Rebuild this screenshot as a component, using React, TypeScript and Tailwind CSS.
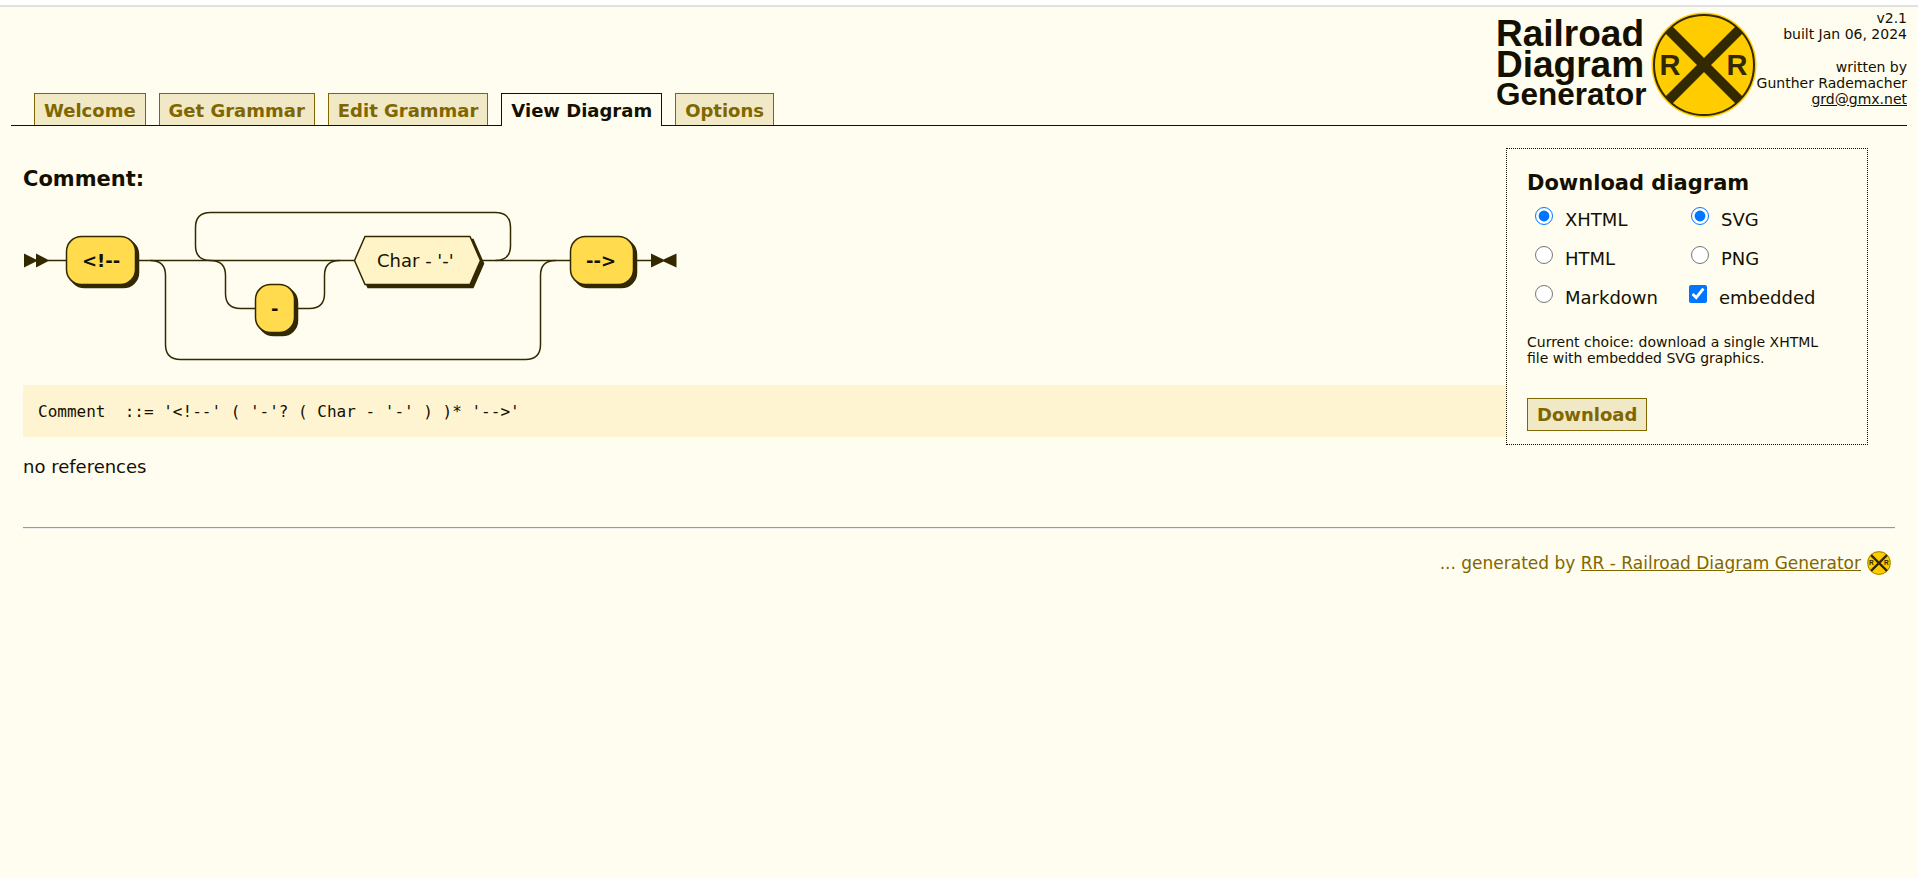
import { useState } from "react";

const tabs = ["Welcome", "Get Grammar", "Edit Grammar", "View Diagram", "Options"];

function CrossingSign({ className }: { className: string }) {
  return (
    <svg viewBox="0 0 106 106" className={className} aria-hidden="true">
      <circle cx="53" cy="53" r="52.5" fill="#ffcc00" />
      <circle cx="53" cy="53" r="50" fill="none" stroke="#332900" strokeWidth="2" />
      <path d="M18 18 88 88M88 18 18 88" stroke="#332900" strokeWidth="10" />
      <g fill="#332900" fontFamily="'Liberation Sans', sans-serif" fontWeight="bold" fontSize="29">
        <text x="8.5" y="63">R</text>
        <text x="75.5" y="63">R</text>
      </g>
    </svg>
  );
}

function Tabs({ active, onSelect }: { active: string; onSelect: (t: string) => void }) {
  return (
    <nav className="flex items-end gap-[13px] pl-[23px]">
      {tabs.map((t) => (
        <button
          key={t}
          type="button"
          onClick={() => onSelect(t)}
          className={
            t === active
              ? "-mb-px h-[33px] border border-b-0 border-[#141000] bg-[#fffdf0] px-[9px] pt-0.5 text-lg leading-none font-bold text-[#141000]"
              : "h-8 border border-b-0 border-[#806600] bg-[#f1e8c6] px-[9px] pt-0.5 text-lg leading-none font-bold text-[#806600]"
          }
        >
          {t}
        </button>
      ))}
    </nav>
  );
}

function Terminal({ x, y, w, label, tx }: { x: number; y: number; w: number; label: string; tx: number }) {
  return (
    <g>
      <rect x={x + 3} y={y + 3} width={w} height="48" rx="15" fill="#332900" stroke="#332900" strokeWidth="1.5" />
      <rect x={x} y={y} width={w} height="48" rx="15" fill="#ffdb4d" stroke="#332900" strokeWidth="1.5" />
      <text x={tx} y={y + 30.5} fill="#141000" fontSize="18" fontWeight="bold">
        {label}
      </text>
    </g>
  );
}

function RailroadDiagram() {
  return (
    <svg viewBox="23 209 656 156" className="h-[156px] w-[656px]" role="img" aria-label="Comment syntax diagram" fontFamily="Verdana, 'DejaVu Sans', sans-serif">
      <g fill="none" stroke="#332900" strokeWidth="1.5">
        <path d="M48 260.5H66M137 260.5H355M481 260.5H570M634 260.5H652" />
        <path d="M210.5 260.5Q195.5 260.5 195.5 245.5V227.5Q195.5 212.5 210.5 212.5H495.5Q510.5 212.5 510.5 227.5V245.5Q510.5 260.5 495.5 260.5" />
        <path d="M210.5 260.5Q225.5 260.5 225.5 275.5V293.5Q225.5 308.5 240.5 308.5H309.5Q324.5 308.5 324.5 293.5V275.5Q324.5 260.5 339.5 260.5" />
        <path d="M150.5 260.5Q165.5 260.5 165.5 275.5V344.5Q165.5 359.5 180.5 359.5H525.5Q540.5 359.5 540.5 344.5V275.5Q540.5 260.5 555.5 260.5" />
      </g>
      <g fill="#332900">
        <path d="M24 253.5 38 260.5 24 267.5ZM36 253.5 49.5 260.5 36 267.5Z" />
        <path d="M651 253.5 663.5 259.5 676.5 253.5V267.5L663.5 261.5 651 267.5Z" />
      </g>
      <Terminal x={66.5} y={236.5} w={69} label="<!--" tx={82} />
      <Terminal x={255.5} y={284.5} w={39} label="-" tx={271} />
      <g stroke="#332900" strokeWidth="1.5">
        <path d="M357.5 263.5 368 239.5H473L483.5 263.5 473 287.5H368Z" fill="#332900" />
        <path d="M354.5 260.5 365 236.5H470L480.5 260.5 470 284.5H365Z" fill="#fff4c7" />
      </g>
      <text x="377" y="267" fill="#1a1400" fontSize="18">
        Char - '-'
      </text>
      <Terminal x={570.5} y={236.5} w={63} label="-->" tx={586} />
    </svg>
  );
}

function DownloadPanel() {
  const [format, setFormat] = useState("XHTML");
  const [graphics, setGraphics] = useState("SVG");
  const [embedded, setEmbedded] = useState(true);
  const radio = (name: string, value: string, current: string, set: (v: string) => void) => (
    <label className="flex h-[39px] items-start gap-3 pl-2">
      <input
        type="radio"
        name={name}
        checked={current === value}
        onChange={() => set(value)}
        className="size-[18px] accent-[#0075ff]"
      />
      <span className="pt-px">{value}</span>
    </label>
  );
  return (
    <section className="mt-[22px] mr-[27px] w-[362px] shrink-0 border border-dotted border-[#141000] px-5 pt-5 pb-[13px]">
      <h2 className="text-[21px] leading-7 font-bold">Download diagram</h2>
      <div className="grid grid-cols-[156px_1fr] pt-2.5 text-lg leading-6">
        {radio("format", "XHTML", format, setFormat)}
        {radio("graphics", "SVG", graphics, setGraphics)}
        {radio("format", "HTML", format, setFormat)}
        {radio("graphics", "PNG", graphics, setGraphics)}
        {radio("format", "Markdown", format, setFormat)}
        <label className="flex h-[39px] items-start gap-3 pl-1.5">
          <input
            type="checkbox"
            checked={embedded}
            onChange={(e) => setEmbedded(e.target.checked)}
            className="size-[18px] accent-[#0075ff]"
          />
          <span className="pt-px">embedded</span>
        </label>
      </div>
      <p className="pt-2.5 text-sm leading-4">
        Current choice: download a single XHTML
        <br />
        file with embedded SVG graphics.
      </p>
      <button type="button" className="mt-8 h-[33px] border border-[#806600] bg-[#f1e8c6] px-[9px] text-lg leading-none font-bold text-[#806600]">
        Download
      </button>
    </section>
  );
}

export default function App() {
  const [active, setActive] = useState("View Diagram");
  return (
    <div className="min-h-screen border-t-[5px] border-white bg-[#fffdf0] font-[Verdana,'DejaVu_Sans',sans-serif] text-[#141000]">
      <div className="h-0.5 bg-[#e1e1e1]" />
      <header className="mx-[11px] flex h-[119px] items-end justify-between border-b border-[#141000]">
        <Tabs active={active} onSelect={setActive} />
        <div className="flex items-start self-start">
          <svg viewBox="0 0 154 106" className="mt-[5px] h-[106px] w-[154px]" role="img" aria-label="Railroad Diagram Generator" fill="#141000" fontFamily="'Liberation Sans', sans-serif" fontWeight="bold">
            <text x="-1" y="33.5" fontSize="37">Railroad</text>
            <text x="-1" y="64.5" fontSize="37">Diagram</text>
            <text x="-1" y="93" fontSize="31.5">Generator</text>
          </svg>
          <CrossingSign className="mt-[5px] h-[106px] w-[106px]" />
          <div className="mt-[3px] text-right text-sm leading-4">
            <div>v2.1</div>
            <div>built Jan 06, 2024</div>
            <div className="mt-[17px]">written by</div>
            <div>Gunther Rademacher</div>
            <a href="mailto:grd@gmx.net" className="underline">
              grd@gmx.net
            </a>
          </div>
        </div>
      </header>

      <main className="mx-[23px]">
        <div className="flex items-start">
          <div className="min-w-0 flex-1 pt-[39px]">
            <h1 className="text-[21px] leading-7 font-bold">Comment:</h1>
            <div className="mt-4">
              <RailroadDiagram />
            </div>
            <pre className="mt-5 bg-[#fff4d1] px-[15px] pt-[15px] pb-[13px] font-['DejaVu_Sans_Mono',monospace] text-base leading-6">
              <code className="font-['DejaVu_Sans_Mono',monospace]">{"Comment  ::= '<!--' ( '-'? ( Char - '-' ) )* '-->'"}</code>
            </pre>
            <p className="pt-[18px] text-lg leading-6">no references</p>
          </div>
          <DownloadPanel />
        </div>
        <hr className="mt-12 border-0 border-t border-b border-t-[#999999] border-b-[#eeeeee]" />
      </main>
      <footer className="mr-[27px] flex items-center justify-end gap-1.5 pt-[22px] text-[17px] leading-6 text-[#806600]">
        <span>
          ... generated by{" "}
          <a href="#generator" className="underline">
            RR - Railroad Diagram Generator
          </a>
        </span>
        <CrossingSign className="size-6" />
      </footer>
    </div>
  );
}
